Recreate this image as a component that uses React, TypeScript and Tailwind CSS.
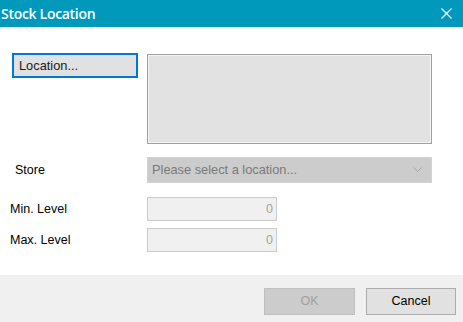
import React from 'react';

const body = { fontFamily: '"Liberation Sans", Arial, sans-serif' };

const NumberBox = () => (
  <div className="w-[130px] h-[24px] border border-[#cccccc] bg-[#f0f0f0] flex items-center justify-end pr-[3px] text-[12.5px] text-[#a3a3a3]">
    0
  </div>
);

const App = () => (
  <div className="w-[463px] h-[322px] flex flex-col bg-white text-black" style={body}>
    <div className="h-[27px] bg-[#0099bc] flex items-center justify-between text-white">
      <span className="pl-[1px] text-[14px] font-semibold tracking-[-0.3px]" style={{ fontFamily: '"Open Sans", sans-serif' }}>
        Stock Location
      </span>
      <svg width="11" height="11" viewBox="0 0 11 11" className="mr-[11px]">
        <path d="M0.5 0.5L10.5 10.5M10.5 0.5L0.5 10.5" stroke="white" strokeWidth="1.2" />
      </svg>
    </div>

    <div className="flex-1 flex flex-col pt-[26px]">
      <div className="flex items-start">
        <button className="ml-[12px] w-[126px] h-[25px] border-2 border-[#0078d7] bg-[#e1e1e1] text-left pl-[5px] text-[12.8px] text-[#1a1a1a]">
          Location...
        </button>
        <div className="ml-[9px] mt-[1px] w-[285px] h-[90px] border border-[#a0a0a0] bg-[#e2e2e2] shadow-[inset_1px_1px_0_#f4f4f4,inset_-1px_-1px_0_#f4f4f4]" />
      </div>

      <div className="flex items-center mt-[13px]">
        <span className="w-[147px] pl-[15px] text-[12.5px]">Store</span>
        <div className="w-[285px] h-[26px] bg-[#cccccc] border border-[#d2d2d2] flex items-center justify-between pl-[4px] pr-[9px] text-[12.8px] text-[#7a7a7a]">
          <span>Please select a location...</span>
          <svg width="9" height="6" viewBox="0 0 9 6">
            <path d="M0.5 0.5L4.5 4.5L8.5 0.5" fill="none" stroke="#a6a6a6" strokeWidth="1" />
          </svg>
        </div>
      </div>

      <div className="flex items-center mt-[14px]">
        <span className="w-[147px] pl-[10px] text-[12.5px]">Min. Level</span>
        <NumberBox />
      </div>

      <div className="flex items-center mt-[7px]">
        <span className="w-[147px] pl-[10px] text-[12.5px]">Max. Level</span>
        <NumberBox />
      </div>
    </div>

    <div className="h-[47px] bg-[#f0f0f0] flex items-start justify-end pt-[13px] pr-[7px] gap-[11px]">
      <button className="w-[91px] h-[27px] bg-[#cccccc] border border-[#bfbfbf] text-[12.5px] text-[#a0a0a0]">OK</button>
      <button className="w-[90px] h-[27px] bg-[#e1e1e1] border border-[#adadad] text-[12.5px] text-black">Cancel</button>
    </div>
  </div>
);

export default App;
